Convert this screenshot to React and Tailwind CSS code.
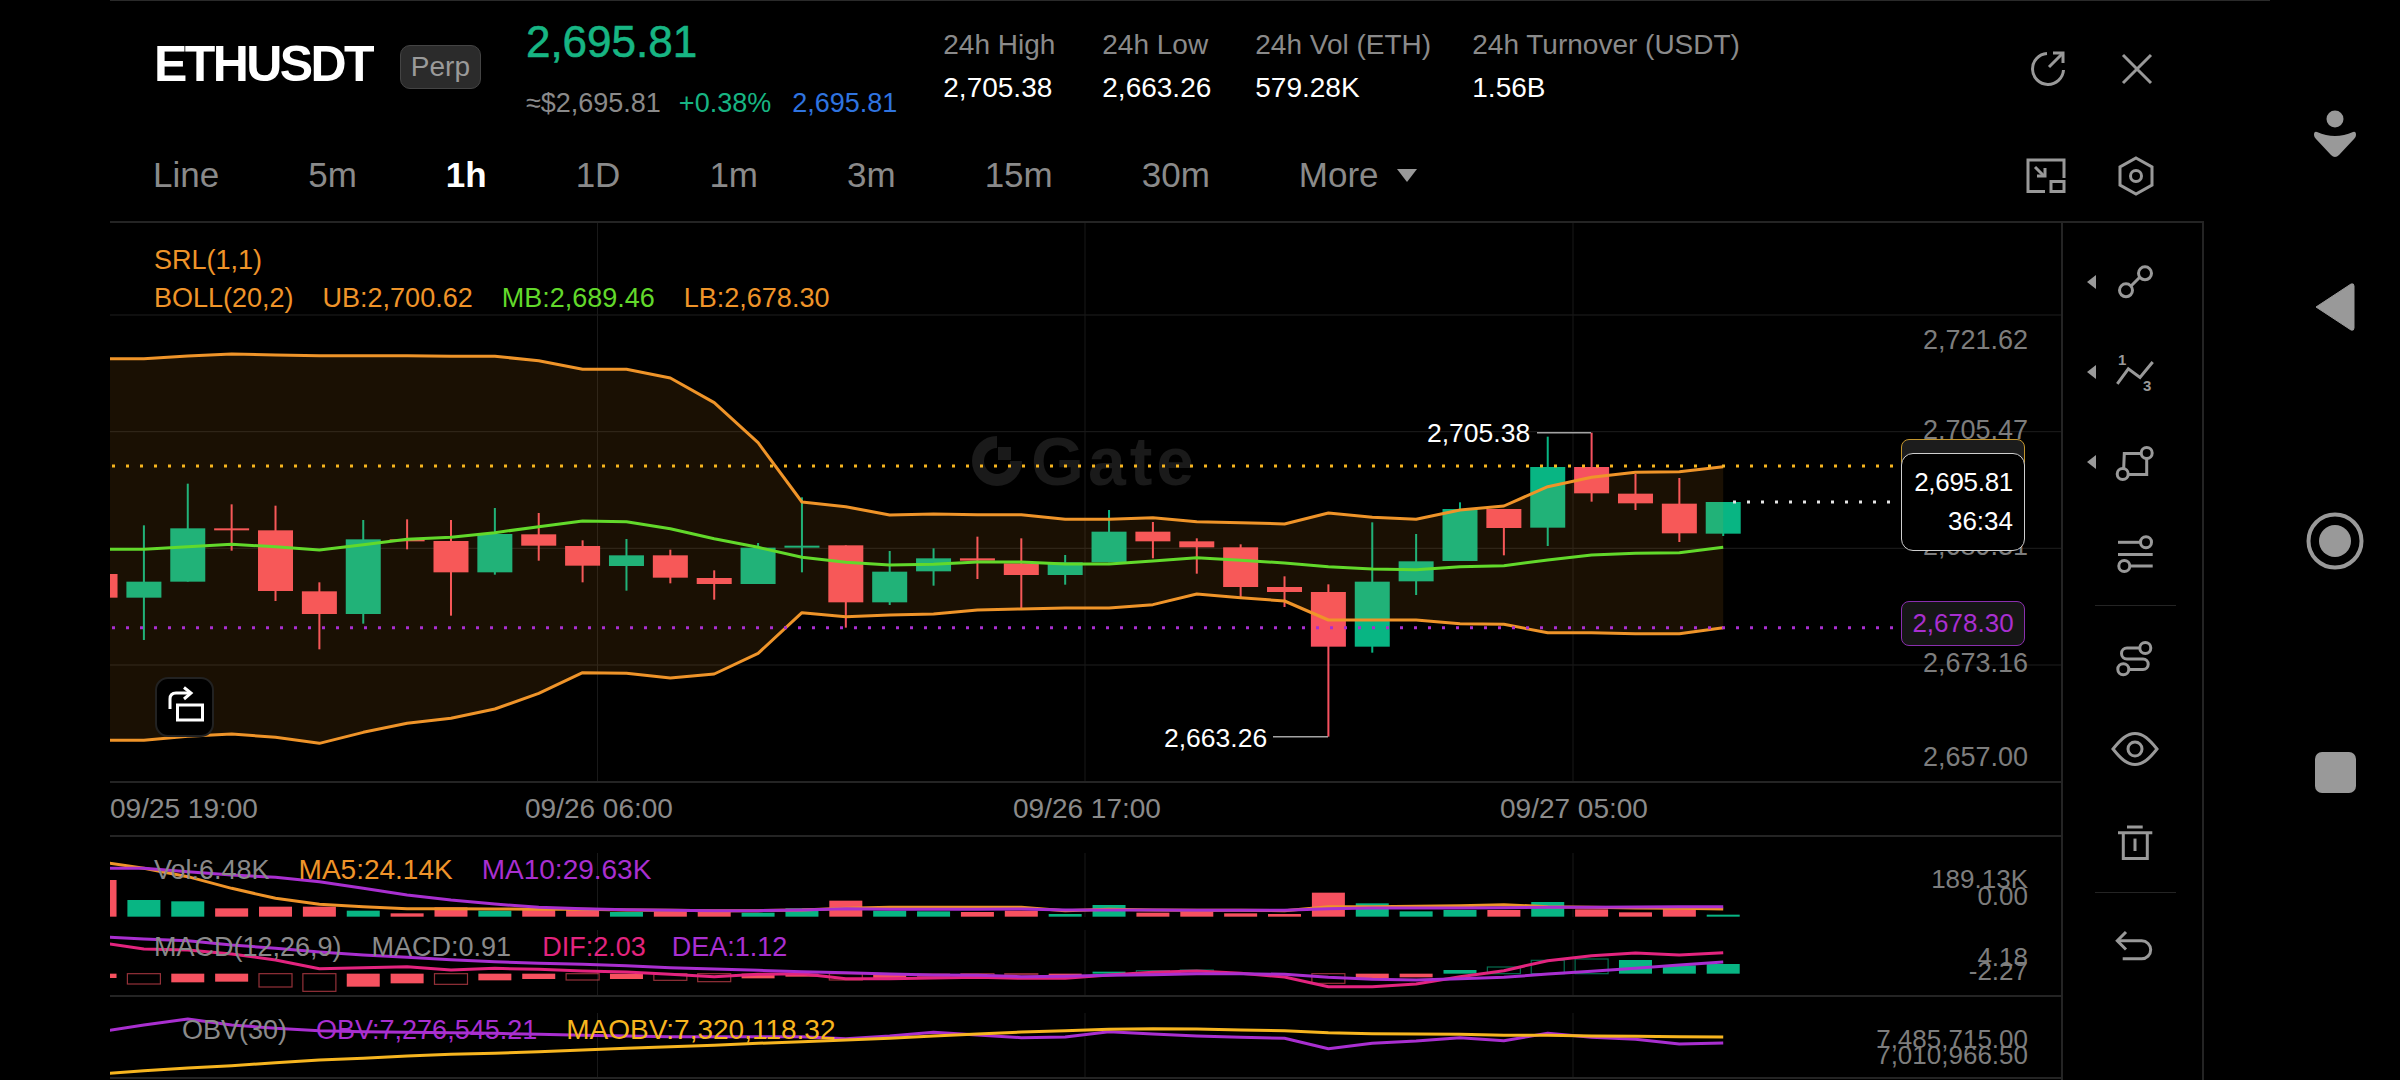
const RED = "#f6515f";
const GREEN = "#08b583";
const ORANGE = "#ef9429";
const LIME = "#62d92b";
const PURPLE = "#a92fd0";
const PINK = "#e3247f";
const AMBER = "#f7b51f";

// candle x position (full page px), index -1 is the clipped one on the left edge
const cx = (i) => 143.9 + i * 43.87;
const my = (v) => 330 + v / 3;
const sy = (v) => 780 + v / 3;

// [wick top, body top, body bottom, wick bottom, up]
const candles = [
  [732, 732, 803, 803, 0],
  [586, 755, 803, 930, 1],
  [461, 595, 755, 755, 1],
  [523, 595, 600, 662, 0],
  [527, 601, 783, 813, 0],
  [757, 784, 852, 958, 0],
  [570, 628, 852, 881, 1],
  [568, 628, 632, 658, 0],
  [570, 633, 727, 857, 0],
  [534, 612, 727, 734, 1],
  [549, 613, 647, 692, 0],
  [631, 648, 707, 757, 0],
  [627, 676, 708, 782, 1],
  [659, 676, 743, 760, 0],
  [721, 744, 762, 809, 0],
  [639, 653, 762, 762, 1],
  [502, 647, 652, 727, 1],
  [646, 646, 817, 893, 0],
  [663, 725, 817, 825, 1],
  [655, 685, 724, 767, 1],
  [620, 685, 692, 747, 0],
  [625, 700, 735, 840, 0],
  [675, 697, 735, 764, 1],
  [540, 605, 697, 697, 1],
  [576, 605, 634, 685, 0],
  [625, 634, 652, 731, 0],
  [643, 652, 771, 805, 0],
  [739, 771, 786, 831, 0],
  [763, 786, 950, 1220, 0],
  [577, 755, 950, 968, 1],
  [612, 694, 754, 795, 1],
  [517, 537, 693, 693, 1],
  [537, 537, 594, 676, 0],
  [320, 411, 593, 648, 1],
  [308, 411, 490, 515, 0],
  [432, 491, 520, 540, 0],
  [444, 521, 610, 636, 0],
  [516, 516, 611, 618, 1],
];

const upper = [86, 86, 78, 72, 75, 77, 77, 77, 79, 79, 92, 118, 118, 144, 218, 338, 516, 530, 555, 552, 554, 554, 568, 568, 563, 575, 578, 582, 549, 562, 568, 540, 528, 470, 442, 427, 425, 410];
const middle = [658, 658, 650, 643, 650, 660, 644, 628, 622, 608, 590, 573, 575, 596, 626, 652, 682, 697, 705, 703, 696, 696, 702, 702, 693, 683, 691, 699, 710, 717, 719, 710, 707, 690, 675, 670, 668, 652];
const lower = [1231, 1231, 1219, 1212, 1222, 1240, 1207, 1180, 1165, 1137, 1090, 1028, 1030, 1044, 1032, 970, 848, 860, 855, 852, 840, 837, 834, 834, 824, 792, 803, 813, 870, 870, 870, 881, 883, 908, 908, 911, 911, 893];

const volume = [
  [300, 0], [360, 1], [364, 1], [385, 0], [380, 0], [380, 0], [392, 1], [400, 0], [382, 0], [392, 1], [390, 0], [390, 0], [396, 1], [394, 0], [396, 0], [398, 1], [385, 1], [362, 0], [392, 1],
  [394, 1], [396, 0], [392, 0], [402, 1], [375, 1], [398, 0], [394, 0], [400, 0], [402, 0], [338, 0], [370, 1], [394, 1], [390, 1], [390, 0], [366, 1], [388, 0], [397, 0], [386, 0], [404, 1],
];
const ma5 = [245, 265, 290, 325, 355, 373, 380, 386, 386, 387, 388, 388, 390, 391, 392, 392, 390, 385, 382, 382, 382, 382, 392, 388, 390, 391, 391, 392, 380, 380, 379, 377, 374, 380, 382, 384, 385, 387];
const ma10 = [265, 265, 275, 285, 292, 305, 325, 345, 360, 372, 382, 386, 389, 391, 392, 392, 390, 386, 388, 388, 388, 387, 390, 390, 390, 391, 391, 391, 386, 384, 384, 384, 383, 382, 382, 381, 380, 380];

// [bar end, hollow, up]
const macdBars = [
  [594, 0, 0], [612, 1, 0], [607, 0, 0], [605, 0, 0], [621, 1, 0], [634, 1, 0], [620, 0, 0], [610, 0, 0], [613, 1, 0], [601, 0, 0], [597, 0, 0], [600, 1, 0], [597, 0, 0], [601, 1, 0], [605, 1, 0], [595, 0, 0], [590, 0, 0], [600, 1, 0], [597, 0, 0],
  [590, 0, 0], [590, 1, 0], [583, 1, 0], [592, 0, 0], [575, 0, 1], [572, 1, 1], [570, 1, 1], [581, 1, 0], [581, 1, 0], [610, 1, 0], [598, 0, 0], [592, 0, 0], [570, 0, 1], [561, 1, 1], [541, 1, 1], [537, 1, 1], [540, 0, 1], [556, 0, 1], [552, 0, 1],
];
const dif = [488, 507, 510, 522, 540, 566, 563, 560, 570, 565, 568, 573, 576, 583, 590, 583, 581, 596, 596, 594, 592, 595, 595, 585, 577, 573, 580, 591, 620, 620, 612, 590, 572, 542, 527, 519, 525, 518];
const dea = [470, 477, 482, 495, 505, 516, 525, 532, 539, 545, 550, 553, 557, 563, 567, 571, 575, 578, 582, 585, 586, 590, 589, 586, 584, 581, 581, 583, 592, 598, 600, 596, 592, 582, 574, 565, 555, 546];
const obv = [755, 735, 717, 735, 745, 752, 755, 757, 758, 760, 763, 766, 768, 770, 770, 770, 770, 776, 768, 757, 765, 773, 771, 755, 762, 768, 772, 775, 806, 790, 783, 773, 782, 760, 772, 778, 792, 789];
const maobv = [882, 872, 864, 857, 848, 840, 835, 828, 823, 820, 815, 810, 805, 800, 796, 790, 785, 780, 775, 768, 762, 756, 752, 748, 746, 747, 750, 752, 758, 761, 762, 763, 766, 766, 768, 769, 770, 771];

const pts = (arr, fy) => arr.map((v, i) => `${cx(i - 1)},${fy(v)}`).join(" ");
const bandPts = `${pts(upper, my)} ${[...lower].map((v, i) => `${cx(i - 1)},${my(v)}`).reverse().join(" ")}`;

const gridX = [597.5, 1085, 1573];
const gridY = [315, 431.7, 548.3, 665];
const priceLabels = [
  ["2,721.62", "top-[101px]"],
  ["2,705.47", "top-[191px]"],
  ["2,689.31", "top-[307px]"],
  ["2,673.16", "top-[424px]"],
  ["2,657.00", "top-[518px]"],
];
const tabs = ["Line", "5m", "1h", "1D", "1m", "3m", "15m", "30m"];
const stats = [
  ["24h High", "2,705.38", "w-[159px]"],
  ["24h Low", "2,663.26", "w-[153px]"],
  ["24h Vol (ETH)", "579.28K", "w-[217px]"],
  ["24h Turnover (USDT)", "1.56B", ""],
];

const Line = ({ points, color, width = 3 }) => (
  <polyline points={points} fill="none" stroke={color} strokeWidth={width} strokeLinejoin="round" />
);

const MainPane = () => (
  <div className="relative h-[558px] border-b-2 border-[#242424] box-content">
    {/* watermark sits under the candles */}
    <div className="absolute left-[862px] top-[213px] flex items-center gap-[9px] text-[#1a1a1a]">
      <svg width="50" height="50" viewBox="0 0 50 50" fill="none">
        <path d="M25 6 A19 19 0 1 0 44 25" stroke="currentColor" strokeWidth="12" />
        <rect x="26" y="11" width="13" height="13" fill="currentColor" />
      </svg>
      <span className="text-[68px] leading-[50px] font-bold tracking-[4px]">Gate</span>
    </div>

    <svg className="relative block" width="1951" height="558" viewBox="110 223 1951 558">
      {gridY.map((y) => (
        <line key={y} x1="110" x2="2061" y1={y} y2={y} stroke="#1e1e1e" strokeWidth="1" />
      ))}
      {gridX.map((x) => (
        <line key={x} x1={x} x2={x} y1="223" y2="781" stroke="#191919" strokeWidth="1" />
      ))}

      {candles.map(([hi, top, bottom, lo, up], i) => (
        <g key={i} fill={up ? GREEN : RED}>
          <rect x={cx(i - 1) - 1} y={my(hi)} width="2" height={(lo - hi) / 3} />
          <rect x={cx(i - 1) - 17.5} y={my(top)} width="35" height={Math.max((bottom - top) / 3, 2)} />
        </g>
      ))}

      <polygon points={bandPts} fill="#ff9a1e" fillOpacity="0.1" />
      <Line points={pts(upper, my)} color={ORANGE} />
      <Line points={pts(lower, my)} color={ORANGE} />
      <Line points={pts(middle, my)} color={LIME} />

      <line x1="112" x2="1900" y1="466" y2="466" stroke={AMBER} strokeWidth="3" strokeDasharray="3 11" />
      <line x1="112" x2="1900" y1="627.7" y2="627.7" stroke={PURPLE} strokeWidth="3" strokeDasharray="3 11" />
      <line x1="1733" x2="1900" y1="502" y2="502" stroke="#e5e5e5" strokeWidth="3" strokeDasharray="3 11" />

      <polyline points="1537,432.7 1591,432.7" stroke="#a3a3a3" strokeWidth="1.5" />
      <polyline points="1273,736.7 1328,736.7" stroke="#a3a3a3" strokeWidth="1.5" />
    </svg>

    {/* legend */}
    <div className="absolute left-[44px] top-[18px] text-[27px] leading-[38px] text-[#ef9429]">
      <div>SRL(1,1)</div>
      <div className="flex gap-[29px]">
        <span>BOLL(20,2)</span>
        <span>UB:2,700.62</span>
        <span className="text-[#62d92b]">MB:2,689.46</span>
        <span>LB:2,678.30</span>
      </div>
    </div>

    {/* price axis */}
    {priceLabels.map(([label, pos]) => (
      <span key={label} className={`absolute right-[33px] ${pos} text-[27px] leading-[32px] text-[#7d7d7d]`}>
        {label}
      </span>
    ))}

    {/* high / low marks */}
    <span className="absolute left-[1317px] top-[194px] text-[26.5px] leading-[32px] text-white">2,705.38</span>
    <span className="absolute left-[1054px] top-[499px] text-[26.5px] leading-[32px] text-white">2,663.26</span>

    {/* price tags */}
    <div className="absolute left-[1791px] top-[216px] h-[44px] w-[124px] rounded-[8px] border border-[#c2952e] bg-[#1c1c1c]" />
    <div className="absolute left-[1791px] top-[230px] flex h-[98px] w-[124px] flex-col items-end justify-center gap-[6px] rounded-[12px] border border-[#cfcfcf] bg-black pr-[11px] text-[26px] leading-[33px] text-white">
      <span className="tracking-[-0.3px]">2,695.81</span>
      <span>36:34</span>
    </div>
    <div className="absolute left-[1791px] top-[378px] flex h-[45px] w-[124px] items-center justify-center rounded-[8px] border border-[#8a2fae] bg-[#161616] text-[26px] text-[#a92fd0]">
      2,678.30
    </div>

    {/* rotate button */}
    <button className="absolute left-[45px] top-[454px] flex h-[60px] w-[59px] items-center justify-center rounded-[13px] border-2 border-[#222] bg-black">
      <svg width="40" height="44" viewBox="0 0 40 44" fill="none" stroke="#fff" strokeWidth="3">
        <path d="M5 24 V14 Q5 8 11 8 H24" />
        <path d="M19 2.5 L26 8 L19 14" />
        <rect x="12.5" y="20" width="25" height="15" />
      </svg>
    </button>
  </div>
);

const TimeAxis = () => (
  <div className="flex h-[52px] items-center whitespace-nowrap border-b-2 border-[#242424] box-content text-[28px] text-[#8a8a8a]">
    <span className="w-[148px]">09/25 19:00</span>
    <span className="ml-[267px] w-[148px]">09/26 06:00</span>
    <span className="ml-[340px] w-[148px]">09/26 17:00</span>
    <span className="ml-[339px] w-[148px]">09/27 05:00</span>
  </div>
);

const SubGrid = ({ y1, y2 }) =>
  gridX.map((x) => <line key={x} x1={x} x2={x} y1={y1} y2={y2} stroke="#191919" strokeWidth="1" />);

const VolPane = () => (
  <div className="relative h-[88px]">
    <svg className="block" width="1951" height="88" viewBox="110 837 1951 88">
      <SubGrid y1="853" y2="917" />
      {volume.map(([top, up], i) => (
        <rect key={i} x={cx(i - 1) - 16.5} y={sy(top)} width="33" height={(410 - top) / 3} fill={up ? GREEN : RED} />
      ))}
      <Line points={pts(ma5, sy)} color={ORANGE} />
      <Line points={pts(ma10, sy)} color={PURPLE} />
    </svg>
    <div className="absolute left-[44px] top-[17px] flex gap-[29px] text-[28px] leading-[32px] text-[#8a8a8a]">
      <span className="text-[27px]">Vol:6.48K</span>
      <span className="text-[#ef9429]">MA5:24.14K</span>
      <span className="text-[#a92fd0]">MA10:29.63K</span>
    </div>
    <span className="absolute right-[33px] top-[26px] text-[26px] leading-[32px] text-[#7d7d7d]">189.13K</span>
    <span className="absolute right-[33px] top-[43px] text-[26px] leading-[32px] text-[#7d7d7d]">0.00</span>
  </div>
);

const MacdPane = () => (
  <div className="relative h-[70px] border-b-2 border-[#242424] box-content">
    <svg className="block" width="1951" height="70" viewBox="110 925 1951 70">
      <SubGrid y1="930" y2="995" />
      {macdBars.map(([end, hollow, up], i) => {
        const top = Math.min(581, end);
        const h = Math.abs(end - 581) / 3;
        const color = up ? GREEN : RED;
        if (h === 0) return null;
        return hollow ? (
          <rect key={i} x={cx(i - 1) - 16.5} y={sy(top)} width="33" height={h} fill="none" stroke={color} strokeOpacity="0.6" strokeWidth="1.2" />
        ) : (
          <rect key={i} x={cx(i - 1) - 16.5} y={sy(top)} width="33" height={h} fill={color} />
        );
      })}
      <Line points={pts(dif, sy)} color={PINK} />
      <Line points={pts(dea, sy)} color={PURPLE} />
    </svg>
    <div className="absolute left-[44px] top-[6px] flex text-[27px] leading-[32px] text-[#8a8a8a]">
      <span>MACD(12,26,9)</span>
      <span className="ml-[30px]">MACD:0.91</span>
      <span className="ml-[31px] text-[#e3247f]">DIF:2.03</span>
      <span className="ml-[26px] text-[#a92fd0]">DEA:1.12</span>
    </div>
    <span className="absolute right-[33px] top-[16px] text-[26px] leading-[32px] text-[#7d7d7d]">4.18</span>
    <span className="absolute right-[33px] top-[30px] text-[26px] leading-[32px] text-[#7d7d7d]">-2.27</span>
  </div>
);

const ObvPane = () => (
  <div className="relative h-[80px] border-b-2 border-[#242424] box-content">
    <svg className="block" width="1951" height="80" viewBox="110 997 1951 80">
      <SubGrid y1="1013" y2="1077" />
      <Line points={pts(obv, sy)} color={PURPLE} />
      <Line points={pts(maobv, sy)} color={AMBER} />
    </svg>
    <div className="absolute left-[72px] top-[17px] flex gap-[29px] text-[27px] leading-[32px] text-[#8a8a8a]">
      <span>OBV(30)</span>
      <span className="text-[#a92fd0]">OBV:7,276,545.21</span>
      <span className="text-[28px] text-[#f7b51f]">MAOBV:7,320,118.32</span>
    </div>
    <span className="absolute right-[33px] top-[26px] text-[26px] leading-[32px] text-[#7d7d7d]">7,485,715.00</span>
    <span className="absolute right-[33px] top-[42px] text-[26px] leading-[32px] text-[#7d7d7d]">7,010,966.50</span>
  </div>
);

const ToolIcon = ({ children }) => (
  <svg width="60" height="60" viewBox="0 0 60 60" fill="none" stroke="#999" strokeWidth="3">
    {children}
  </svg>
);

const ToolRow = ({ arrow, children }) => (
  <div className="relative flex h-[90px] items-center justify-center">
    {arrow && (
      <svg className="absolute left-[19px] top-[38px]" width="9" height="14" viewBox="0 0 9 14">
        <path d="M0 7 L9 0 V14 Z" fill="#999" />
      </svg>
    )}
    {children}
  </div>
);

const Toolbar = () => (
  <div className="flex w-[143px] shrink-0 flex-col border-x-2 border-[#242424] pl-[5px] pt-[14px]">
    <ToolRow arrow>
      <ToolIcon>
        <circle cx="21" cy="38.3" r="6.5" />
        <circle cx="40" cy="21.3" r="6.5" />
        <path d="M26 34 L35 25" />
      </ToolIcon>
    </ToolRow>
    <ToolRow arrow>
      <ToolIcon>
        <path d="M12.3 41.8 L23.3 26.8 L35 35.5 L47.7 20" />
        <text x="13" y="23" fontSize="15" fontWeight="700" fill="#999" stroke="none">1</text>
        <text x="38" y="49" fontSize="15" fontWeight="700" fill="#999" stroke="none">3</text>
      </ToolIcon>
    </ToolRow>
    <ToolRow arrow>
      <ToolIcon>
        <circle cx="17.7" cy="42" r="5.5" />
        <circle cx="41.7" cy="21" r="5.5" />
        <path d="M18.7 36 L19.3 21.6 H36" />
        <path d="M41.7 27 V42.5 H23.5" />
      </ToolIcon>
    </ToolRow>
    <ToolRow>
      <ToolIcon>
        <path d="M13 20.3 H35" />
        <circle cx="41" cy="20.3" r="5.5" />
        <path d="M13 32.5 H47.7" />
        <circle cx="19.3" cy="44" r="5.5" />
        <path d="M25.7 44 H47.7" />
      </ToolIcon>
    </ToolRow>
    <div className="mx-auto my-[8px] h-px w-[81px] bg-[#242424]" />
    <ToolRow>
      <ToolIcon>
        <circle cx="40.3" cy="19" r="5.5" />
        <circle cx="18.3" cy="40.3" r="5.5" />
        <path d="M34.8 19 H22 a5.5 5.5 0 0 0 0 11 H38 a5.2 5.2 0 0 1 0 10.4 H24" />
      </ToolIcon>
    </ToolRow>
    <ToolRow>
      <ToolIcon>
        <path d="M8 30 C16 20 22 14.5 30 14.5 S44 20 52 30 C44 40 38 45.5 30 45.5 S16 40 8 30 Z" />
        <circle cx="30" cy="30" r="7" />
      </ToolIcon>
    </ToolRow>
    <ToolRow>
      <ToolIcon>
        <path d="M13 23.8 H47.3" />
        <path d="M22 18 H37.7" />
        <path d="M18.3 23.8 V49.5 H42.3 V23.8" />
        <path d="M30 29.6 V42" />
      </ToolIcon>
    </ToolRow>
    <div className="mx-auto my-[8px] h-px w-[81px] bg-[#242424]" />
    <ToolRow>
      <ToolIcon>
        <path d="M21 16 L12.3 24.8 L21 33.5" />
        <path d="M12.3 24.8 H36.7 a9 9 0 0 1 0 18 H17.7" />
      </ToolIcon>
    </ToolRow>
  </div>
);

const NavBar = () => (
  <div className="flex w-[130px] shrink-0 flex-col items-center pt-[109px]">
    <svg width="46" height="50" viewBox="0 0 46 50">
      <circle cx="23" cy="10" r="8.5" fill="#999" />
      <path d="M5 23 Q23 31 41 23 Q44 22 44 26 Q44 28 42 30 L27 46 Q23 50 19 46 L4 30 Q2 28 2 26 Q2 22 5 23 Z" fill="#999" />
    </svg>
    <svg className="mt-[124px]" width="40" height="48" viewBox="0 0 40 48">
      <path d="M1 24 L36 1 Q39 0 39 3 V45 Q39 48 36 47 Z" fill="#999" stroke="#999" strokeLinejoin="round" />
    </svg>
    <svg className="mt-[181px]" width="58" height="58" viewBox="0 0 58 58" fill="none">
      <circle cx="29" cy="29" r="26.5" stroke="#999" strokeWidth="4" />
      <circle cx="29" cy="29" r="16" fill="#999" />
    </svg>
    <div className="mt-[182px] h-[41px] w-[41px] rounded-[7px] bg-[#999]" />
  </div>
);

export default function App() {
  return (
    <div className="flex h-[1080px] w-[2400px] overflow-hidden bg-black font-['Liberation_Sans',Arial,sans-serif]">
      <div className="w-[110px] shrink-0" />

      <div className="flex w-[2160px] shrink-0 flex-col border-t border-[#2a2a2a]">
        <div className="flex w-[2094px] flex-col">
          {/* HEADER */}
          <div className="flex h-[129px] items-start pl-[44px] pr-[50px]">
            <h1 className="mt-[39px] text-[50px] font-bold leading-[48px] tracking-[-2.6px] text-white">ETHUSDT</h1>
            <span className="ml-[28px] mt-[44px] flex h-[44px] w-[81px] items-center justify-center rounded-[10px] border border-[#444] bg-[#2b2b2b] text-[28px] text-[#9a9a9a]">
              Perp
            </span>
            <div className="ml-[45px]">
              <div className="mt-[16px] text-[44px] leading-[50px] text-[#17b583] [-webkit-text-stroke:0.6px_#17b583]">2,695.81</div>
              <div className="mt-[20px] flex text-[27px] leading-[32px] text-[#8a8a8a]">
                <span>≈$2,695.81</span>
                <span className="ml-[18px] text-[#17b583]">+0.38%</span>
                <span className="ml-[21px] text-[#2f74e0]">2,695.81</span>
              </div>
            </div>
            <div className="ml-[46px] mt-[27px] flex text-[28px] leading-[34px]">
              {stats.map(([label, value, width]) => (
                <div key={label} className={width}>
                  <div className="text-[#8a8a8a]">{label}</div>
                  <div className="mt-[9px] text-white">{value}</div>
                </div>
              ))}
            </div>
            <div className="ml-auto mt-[49px] flex items-center gap-[54px]">
              <svg width="36" height="38" viewBox="0 0 36 38" fill="none" stroke="#999" strokeWidth="3">
                <path d="M17 3.5 A15.5 15.5 0 1 0 33.5 20" />
                <path d="M19 17 L33 3" />
                <path d="M23 3 H33 V13" />
              </svg>
              <svg width="34" height="34" viewBox="0 0 34 34" fill="none" stroke="#999" strokeWidth="3">
                <path d="M3 3 L31 31 M31 3 L3 31" />
              </svg>
            </div>
          </div>

          {/* TABS */}
          <div className="flex h-[91px] items-center pl-[43px] pr-[50px] text-[35px] text-[#8a8a8a]">
            <div className="flex items-center gap-[89px]">
              {tabs.map((tab) => (
                <span key={tab} className={tab === "1h" ? "font-bold text-white" : ""}>
                  {tab}
                </span>
              ))}
              <span className="flex items-center gap-[18px]">
                More
                <svg width="20" height="13" viewBox="0 0 20 13">
                  <path d="M0 0 H20 L10 13 Z" fill="#999" />
                </svg>
              </span>
            </div>
            <div className="ml-auto flex items-center gap-[52px]">
              <svg width="40" height="36" viewBox="0 0 40 36" fill="none" stroke="#999" strokeWidth="3">
                <path d="M19 33.5 H2 V2 H38 V20" />
                <rect x="25" y="23.5" width="13" height="10" />
                <path d="M9 9 L18 18" />
                <path d="M19 10 V18 H11" />
              </svg>
              <svg width="36" height="40" viewBox="0 0 36 40" fill="none" stroke="#999" strokeWidth="3">
                <path d="M18 2 L34 11 V29 L18 38 L2 29 V11 Z" />
                <circle cx="18" cy="20" r="5.5" />
              </svg>
            </div>
          </div>

          {/* CHART + TOOLS */}
          <div className="flex h-[859px] border-t-2 border-[#242424]">
            <div className="w-[1951px] shrink-0">
              <MainPane />
              <TimeAxis />
              <VolPane />
              <MacdPane />
              <ObvPane />
            </div>
            <Toolbar />
          </div>
        </div>
      </div>

      <NavBar />
    </div>
  );
}
